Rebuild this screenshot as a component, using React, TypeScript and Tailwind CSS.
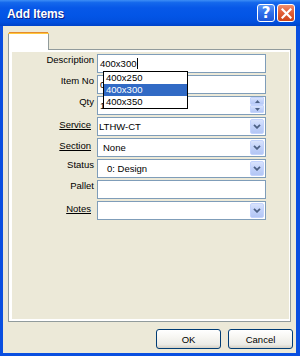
import React from "react";

function ComboButton() {
  return (
    <div className="w-[14px] h-[15px] rounded-[2px] border border-[#C3D3FD] bg-[linear-gradient(180deg,#D9E3FC_0%,#C3D3FA_45%,#B3C6F4_100%)] flex items-center justify-center">
      <svg width="8" height="5" viewBox="0 0 8 5">
        <path d="M1 0.8 L4 3.8 L7 0.8" fill="none" stroke="#4D6185" strokeWidth="1.8" />
      </svg>
    </div>
  );
}

function SpinButton({ up }: { up?: boolean }) {
  return (
    <div className="w-[14px] h-[8px] rounded-[1px] border border-[#C3D3FD] bg-[linear-gradient(180deg,#D9E3FC_0%,#C3D3FA_50%,#B6C8F5_100%)] flex items-center justify-center">
      <svg width="5" height="3" viewBox="0 0 5 3">
        {up ? <path d="M0 3 L2.5 0 L5 3 Z" fill="#4D6185" /> : <path d="M0 0 L2.5 3 L5 0 Z" fill="#4D6185" />}
      </svg>
    </div>
  );
}

type Row = {
  label: string;
  link?: boolean;
  value?: string;
  kind: "text" | "combo" | "spin";
  pl?: string;
  caret?: boolean;
};

const rows: Row[] = [
  { label: "Description", kind: "text", value: "400x300", pl: "pl-[2px]", caret: true },
  { label: "Item No", kind: "text", value: "0", pl: "pl-[2px]" },
  { label: "Qty", kind: "spin", value: "1", pl: "pl-[2px]" },
  { label: "Service", link: true, kind: "combo", value: "LTHW-CT", pl: "pl-[1px]" },
  { label: "Section", link: true, kind: "combo", value: "None", pl: "pl-[5px]" },
  { label: "Status", kind: "combo", value: "0: Design", pl: "pl-[9px]" },
  { label: "Pallet", kind: "text", value: "", pl: "pl-[2px]" },
  { label: "Notes", link: true, kind: "combo", value: "", pl: "pl-[2px]" },
];

export default function App() {
  return (
    <div className="relative w-[300px] h-[356px] overflow-hidden flex flex-col bg-[#0A4FE0] font-['Liberation_Sans',Arial,sans-serif] text-[9.5px] text-black">
      {/* Title bar */}
      <div className="h-[26px] shrink-0 flex items-center pl-[7px] pr-[5px] bg-[linear-gradient(180deg,#3D8EF5_0%,#1468EC_10%,#0758E8_30%,#0355E6_60%,#0250DE_85%,#0043C8_100%)]">
        <span className="flex-1 pt-[2px] text-white font-bold text-[12px] tracking-[-0.1px] leading-[14px] [text-shadow:1px_1px_0_#0B1E8A]">
          Add Items
        </span>
        <div className="w-[18px] h-[18px] rounded-[3px] border border-white bg-[linear-gradient(180deg,#5A97F8_0%,#2E6EEA_50%,#1E56D6_100%)] flex items-center justify-center text-white font-bold text-[15px] leading-[15px] font-['DejaVu_Sans',sans-serif]">
          ?
        </div>
        <div className="ml-[2px] w-[18px] h-[18px] rounded-[3px] border border-white bg-[linear-gradient(180deg,#F0906E_0%,#E2603A_45%,#CC4519_100%)] flex items-center justify-center">
          <svg width="11" height="11" viewBox="0 0 11 11">
            <path d="M1.5 1.5 L9.5 9.5 M9.5 1.5 L1.5 9.5" stroke="white" strokeWidth="2.2" strokeLinecap="square" />
          </svg>
        </div>
      </div>

      {/* Client area */}
      <div className="flex-1 ml-[3px] mr-[4px] mb-[3px] bg-[#ECE9D8] flex flex-col">
        {/* Tab control */}
        <div className="pt-[6px] pl-[5px]">
          <div className="w-[283px] h-[18px] flex">
            <div className="w-[41px] h-full flex flex-col">
              <div className="h-[1px] mx-[1px] bg-[#E68B2C]" />
              <div className="h-[1px] bg-[#FFC73C]" />
              <div className="flex-1 bg-white border-l border-r border-[#919B9C]" />
            </div>
            <div className="flex-1 border-b border-[#919B9C]" />
          </div>
          <div className="w-[283px] h-[272px] border-l border-r border-b border-[#919B9C] bg-white flex">
            <div className="flex-1 ml-[3px] mt-[2px] mr-[1px] mb-[2px] bg-[#ECE9D8] pt-[2px] flex flex-col gap-[2px]">
              {rows.map((r) => (
                <div key={r.label} className="h-[19px] flex">
                  <div
                    className={
                      r.link
                        ? "w-[82px] pr-[3px] pt-[2px] text-right leading-[11px] underline underline-offset-[1px]"
                        : "w-[82px] pt-[1px] text-right leading-[10px]"
                    }
                  >
                    {r.label}
                  </div>
                  <div className="ml-[3px] w-[169px] h-[19px] border border-[#7F9DB9] bg-white flex items-center">
                    <div className={"flex-1 flex items-center leading-[11px] whitespace-nowrap " + (r.pl ?? "")}>
                      <span>{r.value}</span>
                      {r.caret && <span className="ml-[1px] w-[1px] h-[11px] bg-black" />}
                    </div>
                    {r.kind === "combo" && (
                      <div className="pr-[1px]">
                        <ComboButton />
                      </div>
                    )}
                    {r.kind === "spin" && (
                      <div className="pr-[1px] h-full flex flex-col">
                        <SpinButton up />
                        <SpinButton />
                      </div>
                    )}
                  </div>
                </div>
              ))}
            </div>
          </div>
        </div>

        {/* Buttons */}
        <div className="mt-[7px] pr-[3px] flex justify-end gap-[7px]">
          {["OK", "Cancel"].map((t) => (
            <div
              key={t}
              className="w-[65px] h-[20px] rounded-[3px] border border-[#003C74] bg-[linear-gradient(180deg,#FFFFFF_0%,#F7F6F2_40%,#ECEBE6_80%,#D6D0C5_100%)] flex items-center justify-center leading-[11px]"
            >
              {t}
            </div>
          ))}
        </div>
      </div>

      {/* Dropdown list overlay */}
      <div className="absolute left-[103px] top-[71px] w-[85px] border border-black bg-white flex flex-col">
        <div className="h-[12px] leading-[12px] pl-[2px]">400x250</div>
        <div className="h-[12px] leading-[12px] pl-[2px] bg-[#316AC5] text-white">400x300</div>
        <div className="h-[12px] leading-[12px] pl-[2px]">400x350</div>
      </div>
    </div>
  );
}
